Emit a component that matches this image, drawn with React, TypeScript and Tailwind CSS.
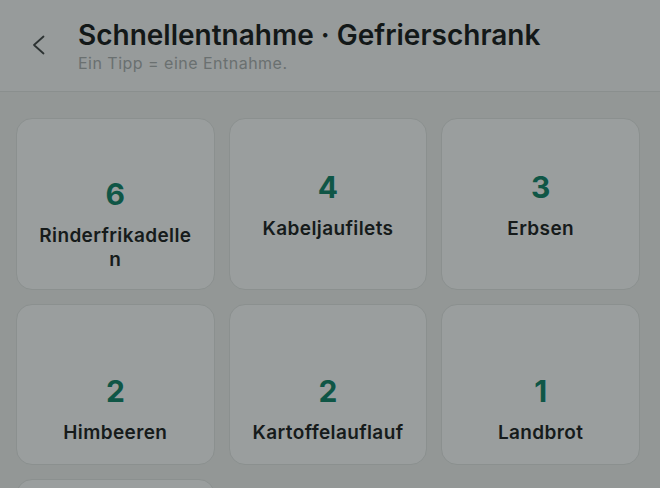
import React from "react";

type Item = { n: number; label: string; pt: string };

const rows: Item[][] = [
  [
    { n: 6, label: "Rinderfrikadellen", pt: "pt-[57px]" },
    { n: 4, label: "Kabeljaufilets", pt: "pt-[50px]" },
    { n: 3, label: "Erbsen", pt: "pt-[50px]" },
  ],
  [
    { n: 2, label: "Himbeeren", pt: "pt-[68px]" },
    { n: 2, label: "Kartoffelauflauf", pt: "pt-[68px]" },
    { n: 1, label: "Landbrot", pt: "pt-[68px]" },
  ],
];

function Card({ item }: { item: Item }) {
  return (
    <button
      className={`flex flex-col items-center rounded-[16px] border border-[#8b908f] bg-[#9a9e9e] px-5 ${item.pt}`}
    >
      <div className="text-[30px] font-bold leading-9 text-[#0f5646]">{item.n}</div>
      <div className="mt-[12px] w-full text-center text-[19px] font-semibold leading-6 tracking-[0.02em] text-[#161b1b] break-all">
        {item.label}
      </div>
    </button>
  );
}

export default function App() {
  return (
    <div
      className="h-[488px] w-[660px] overflow-hidden bg-[#939796]"
      style={{ fontFamily: "Inter, 'Noto Sans', sans-serif" }}
    >
      <header className="flex h-[92px] items-center border-b border-[#8a8f8e] bg-[#979b9b] pl-[32px]">
        <svg width="13" height="20" viewBox="0 0 13 20" className="mb-[1px] shrink-0">
          <polyline
            points="11.5,1.5 2,10 11.5,18.5"
            fill="none"
            stroke="#2c3232"
            strokeWidth="1.8"
            strokeLinecap="round"
            strokeLinejoin="round"
          />
        </svg>
        <div className="ml-[33px] flex flex-col">
          <h1 className="text-[28px] font-semibold leading-8 text-[#131818]">
            Schnellentnahme · Gefrierschrank
          </h1>
          <p className="mt-[2px] text-[16px] leading-5 tracking-[0.03em] text-[#6a7070]">
            Ein Tipp = eine Entnahme.
          </p>
        </div>
      </header>
      <main className="grid grid-cols-3 grid-rows-[172px_161px_161px] gap-[14px] pl-4 pr-[20px] pt-[26px]">
        {rows.flat().map((it, i) => (
          <Card key={i} item={it} />
        ))}
        <div className="rounded-[16px] border border-[#8b908f] bg-[#9a9e9e]" />
      </main>
    </div>
  );
}
